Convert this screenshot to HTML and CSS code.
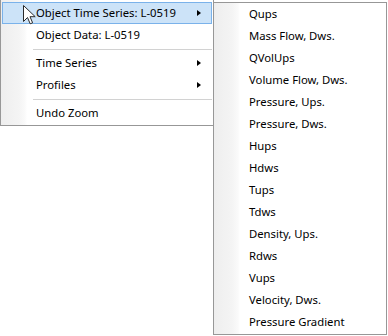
FILE: index.html
```html
<!DOCTYPE html>
<html>
<head>
<meta charset="utf-8">
<link rel="stylesheet" href="styles.css">
</head>
<body>
<div class="scene">
  <div class="menu main">
    <div class="item active"><span class="label">Object Time Series: L-0519</span><span class="arrow"></span></div>
    <div class="item"><span class="label">Object Data: L-0519</span></div>
    <div class="sep"></div>
    <div class="item"><span class="label">Time Series</span><span class="arrow"></span></div>
    <div class="item"><span class="label">Profiles</span><span class="arrow"></span></div>
    <div class="sep"></div>
    <div class="item"><span class="label">Undo Zoom</span></div>
  </div>
  <div class="menu sub">
    <div class="item"><span class="label">Qups</span></div>
    <div class="item"><span class="label">Mass Flow, Dws.</span></div>
    <div class="item"><span class="label">QVolUps</span></div>
    <div class="item"><span class="label">Volume Flow, Dws.</span></div>
    <div class="item"><span class="label">Pressure, Ups.</span></div>
    <div class="item"><span class="label">Pressure, Dws.</span></div>
    <div class="item"><span class="label">Hups</span></div>
    <div class="item"><span class="label">Hdws</span></div>
    <div class="item"><span class="label">Tups</span></div>
    <div class="item"><span class="label">Tdws</span></div>
    <div class="item"><span class="label">Density, Ups.</span></div>
    <div class="item"><span class="label">Rdws</span></div>
    <div class="item"><span class="label">Vups</span></div>
    <div class="item"><span class="label">Velocity, Dws.</span></div>
    <div class="item"><span class="label">Pressure Gradient</span></div>
  </div>
  <svg class="cursor" width="13" height="20" viewBox="0 0 13 20">
    <path d="M0.5,0.5 L0.5,16.5 L4.5,12.5 L7.2,18.8 L9.6,17.8 L7,11.7 L12.2,11.7 Z" fill="#ffffff" stroke="#2a2a2a" stroke-width="1" stroke-linejoin="miter"/>
  </svg>
</div>
</body>
</html>
```
FILE: styles.css
```css
html, body {
  margin: 0;
  padding: 0;
  background: #ffffff;
}
.scene {
  position: relative;
  width: 388px;
  height: 336px;
  font-family: "Noto Sans", "Open Sans", sans-serif;
  font-size: 11.3px;
  color: #000000;
}
.menu {
  box-sizing: border-box;
  border: 1px solid #979797;
  background-color: #ffffff;
  background-image: linear-gradient(to right, #eeeeee 0px, #f4f4f4 18px, #fafafa 24px, #ffffff 26px);
  background-repeat: no-repeat;
  background-size: 26px 100%;
  display: flex;
  flex-direction: column;
}
.main {
  width: 214px;
  border-top: none;
  padding: 2px 1px 1px 1px;
}
.sub {
  position: absolute;
  left: 213px;
  top: 2px;
  width: 174px;
  padding: 0 1px 1px 1px;
}
.item {
  box-sizing: border-box;
  height: 22px;
  display: flex;
  align-items: center;
  padding-left: 33px;
  padding-right: 10px;
  border: 1px solid transparent;
  white-space: nowrap;
}
.label {
  flex: 1;
  line-height: 16px;
}
.item.active {
  background: #cce3f8;
  border-color: #7ab2ea;
}
.arrow {
  width: 0;
  height: 0;
  border-top: 3.5px solid transparent;
  border-bottom: 3.5px solid transparent;
  border-left: 4px solid #000000;
}
.sep {
  height: 1px;
  margin: 3px 0 2px 31px;
  background: #d2d2d2;
}
.cursor {
  position: absolute;
  left: 23px;
  top: 5px;
}
```
